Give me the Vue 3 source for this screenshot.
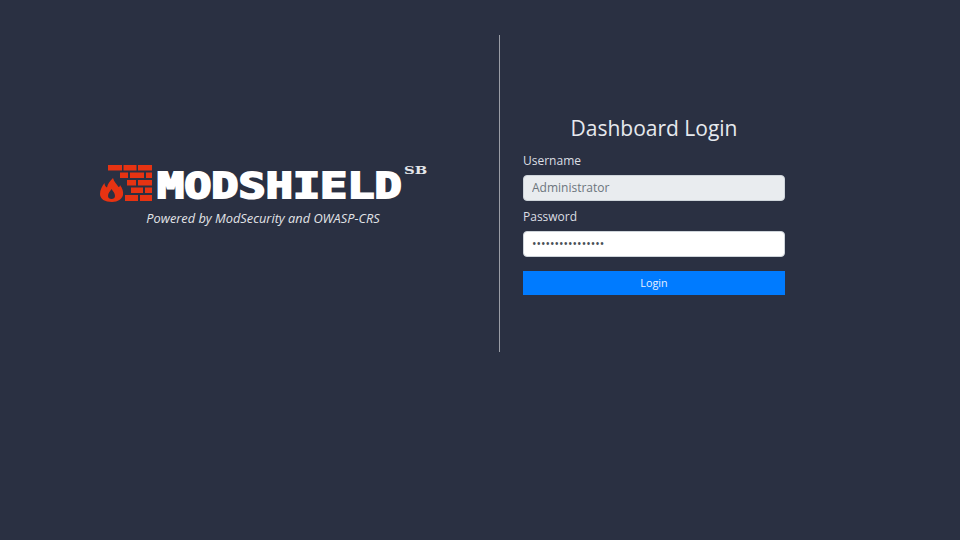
<script setup>
const bricks = [
  [108,165,14,5.5],[123.5,165,13,5.5],[138,165,14,5.5],
  [120,172.5,8,5.5],[130,172.5,14,5.5],[146,172.5,6,5.5],
  [127,180,9,5.5],[138,180,14,5.5],
  [131,187.5,12,5.5],[145,187.5,7,5.5],
  [125,195,13,6],[140,195,12,6]
]
</script>

<template>
  <main class="page">
    <section class="brand">
      <div class="logo">
        <svg class="mark" width="54" height="40" viewBox="98 163 54 40" aria-hidden="true">
          <rect v-for="(b, i) in bricks" :key="i" :x="b[0]" :y="b[1]" :width="b[2]" :height="b[3]" fill="#e63312" />
          <path fill="#e63312" fill-rule="evenodd" d="M113 178C114 182 117 184 118.500 187C119.500 187 120 186 120 185C122.500 188 123.500 192 123 195C122 199 118 202 112 202C105 202 100 199 100 194C100 190 102 186 104.500 183C104.500 185 105.500 186.500 107 187.500C107.500 184 110 181 113 178ZM111.500 189C110 191.500 108 193 108 196C108 198 109.500 199 111.500 199C113.500 199 115 198 115 196C115 193 113 191.500 111.500 189Z"/>
        </svg>
        <span class="wordmark">MODSHIELD</span>
        <span class="sb">SB</span>
      </div>
      <p class="tagline">Powered by ModSecurity and OWASP-CRS</p>
    </section>
    <section class="panel">
      <form class="login" @submit.prevent>
        <h1>Dashboard Login</h1>
        <label for="user">Username</label>
        <input id="user" type="text" placeholder="Administrator" disabled />
        <label for="pass">Password</label>
        <input id="pass" type="password" value="aaaaaaaaaaaaaaaa" />
        <button type="submit">Login</button>
      </form>
    </section>
  </main>
</template>

<style>
html, body { margin: 0; background: #2a3042; }
</style>

<style scoped>
.page {
  width: 960px;
  height: 540px;
  box-sizing: border-box;
  padding-top: 35px;
  display: flex;
  align-items: flex-start;
  background: #2a3042;
  font-family: "Open Sans", sans-serif;
  color: #dee2e6;
}
.brand {
  width: 500px;
  height: 317px;
  box-sizing: border-box;
  border-right: 1px solid #9a9da6;
  padding: 128px 0 0 27px;
  display: flex;
  flex-direction: column;
  align-items: center;
}
.logo {
  display: flex;
  align-items: flex-start;
  align-self: flex-start;
  height: 40px;
  margin-left: 71px;
}
.mark { display: block; flex: none; }
.wordmark {
  display: inline-block;
  width: 245px;
  flex: none;
  font-family: "DejaVu Sans Mono", monospace;
  font-weight: 700;
  font-size: 35px;
  line-height: 44px;
  color: #fff;
  margin: 1px 0 0 5px;
  -webkit-text-stroke: 2px #fff;
  transform: scaleX(1.29);
  transform-origin: left center;
}
.sb {
  display: inline-block;
  flex: none;
  font-family: "DejaVu Serif", serif;
  font-weight: 700;
  font-size: 11px;
  line-height: 12px;
  margin: 2px 0 0 2px;
  color: #e4e6ea;
  transform: scaleX(1.35);
  transform-origin: left center;
}
.tagline {
  margin: 6px 0 0;
  font-size: 12.8px;
  line-height: 18px;
  font-style: italic;
  color: #e2e4e8;
}
.panel {
  padding: 80px 0 0 23px;
}
.login {
  width: 262px;
  display: flex;
  flex-direction: column;
}
h1 {
  margin: 0 0 10px;
  font-size: 21px;
  line-height: 27px;
  font-weight: 400;
  text-align: center;
  color: #e6e9ee;
}
label {
  font-size: 12px;
  line-height: 18px;
  margin-bottom: 5px;
  color: #dcdfe4;
}
input {
  box-sizing: border-box;
  height: 26px;
  margin: 0 0 7px;
  padding: 0 8px 1px;
  border: 1px solid #ced4da;
  border-radius: 4px;
  font: 12px "Open Sans", sans-serif;
  color: #495057;
  background: #fff;
  outline: none;
}
input:disabled { background: #e9ecef; }
input::placeholder { color: #6c757d; opacity: 1; }
button {
  height: 24px;
  margin-top: 7px;
  padding: 0 0 2px;
  border: 1px solid #007bff;
  background: #007bff;
  color: #e8f1ff;
  font: 10.8px "Open Sans", sans-serif;
}
</style>
